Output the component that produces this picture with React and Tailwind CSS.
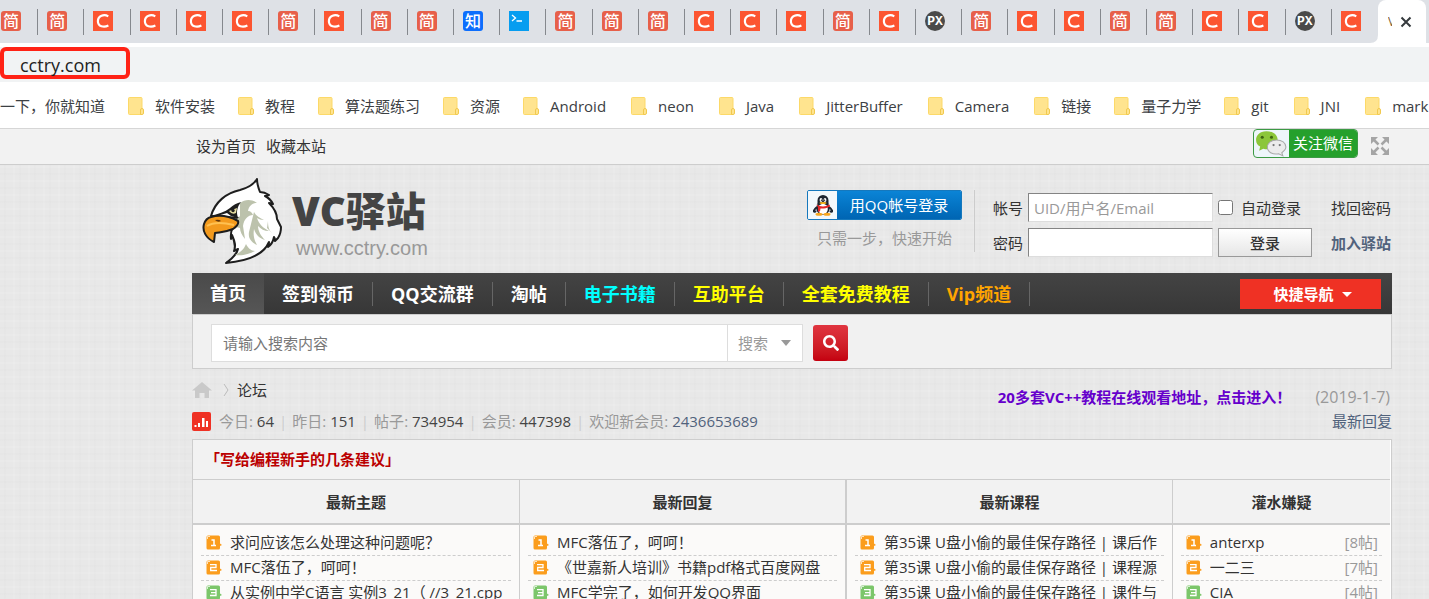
import { FaSearch } from 'react-icons/fa'

const tabs = 'J J C C C C J C J J Z T J J J C C C J C P J C C J J C C P C'.split(' ')

const bookmarks = [
  '软件安装', '教程', '算法题练习', '资源', 'Android', 'neon', 'Java', 'JitterBuffer',
  'Camera', '链接', '量子力学', 'git', 'JNI', 'mark',
]

const navLinks = [
  { label: '首页', color: 'text-white bg-gradient-to-b from-[#4a4a4a] to-[#565656]' },
  { label: '签到领币', color: 'text-white border-r' },
  { label: 'QQ交流群', color: 'text-white border-r' },
  { label: '淘帖', color: 'text-white border-r' },
  { label: '电子书籍', color: 'text-[#00ffff] border-r' },
  { label: '互助平台', color: 'text-[#ffff00] border-r' },
  { label: '全套免费教程', color: 'text-[#ffff00] border-r' },
  { label: 'Vip频道', color: 'text-[#ffa500] border-r' },
]

const stats = [
  { label: '今日', value: '64' },
  { label: '昨日', value: '151' },
  { label: '帖子', value: '734954' },
  { label: '会员', value: '447398' },
  { label: '欢迎新会员', value: '2436653689', link: true },
]

const columns = [
  {
    title: '最新主题',
    items: ['求问应该怎么处理这种问题呢？', 'MFC落伍了，呵呵！', '从实例中学C语言 实例3_21（ //3_21.cpp'],
  },
  {
    title: '最新回复',
    items: ['MFC落伍了，呵呵！', '《世嘉新人培训》书籍pdf格式百度网盘', 'MFC学完了，如何开发QQ界面'],
  },
  {
    title: '最新课程',
    items: [
      '第35课 U盘小偷的最佳保存路径 | 课后作',
      '第35课 U盘小偷的最佳保存路径 | 课程源',
      '第35课 U盘小偷的最佳保存路径 | 课件与',
    ],
  },
  {
    title: '灌水嫌疑',
    items: ['anterxp', '一二三', 'CIA'],
    counts: ['[8帖]', '[7帖]', '[4帖]'],
  },
]

function TabIcon({ type }) {
  if (type === 'J') {
    return (
      <span className="w-5 h-5 rounded-[3px] bg-[#e7604a] text-white text-base leading-5 font-medium text-center">简</span>
    )
  }
  if (type === 'Z') {
    return (
      <span className="w-5 h-5 rounded-[3px] bg-[#0d6efd] text-white text-base leading-5 font-medium text-center">知</span>
    )
  }
  if (type === 'T') {
    return (
      <svg className="w-5 h-5" viewBox="0 0 20 20" fill="none" stroke="#fff" strokeWidth="1.3">
        <path d="M0 0h20v20H0z" fill="#069df0" stroke="none" />
        <path d="M3 4l3.5 3L3 10M7.5 10H13" />
      </svg>
    )
  }
  if (type === 'P') {
    return (
      <span className="w-5 h-5 rounded-full bg-[#4a4a4a] text-white text-[13px] leading-[21px] font-bold flex justify-center font-['Liberation_Mono',monospace]">PX</span>
    )
  }
  return (
    <svg className="w-5 h-5" viewBox="0 0 20 20" fill="none">
      <path d="M0 0h20v20H0z" fill="#fc5531" />
      <path d="M15.3 5.400C11 2.800 4.900 4.800 4.900 10.200S10.800 16.800 15.400 14.600" stroke="#fff" strokeWidth="2.2" />
    </svg>
  )
}

function FolderIcon() {
  return (
    <svg className="w-4 h-[18px] shrink-0" viewBox="0 0 16 18">
      <rect x=".5" y=".5" width="13.5" height="17" rx="1" fill="#ffe48f" stroke="#fcd968" />
      <path d="M12.5 17.5v-4.500q0-1.5 1.5-1.5t1.5 1.5v3q0 1.5-1.5 1.5z" fill="#ffe48f" stroke="#f1c94f" />
    </svg>
  )
}

function Eagle() {
  return (
    <svg className="w-20 h-[86px]" viewBox="0 0 80 86" strokeLinejoin="round">
      <path
        d="M9 38C13 24 24 15 38 12c8-2 14-6 17-11 0 5 1 8 3 13 4 0 6 1 9 3l-4 1c4 2 6 4 8 8l-4-1c5 5 8 10 8 16l4 8c0 5-1 8-3 11l-3 3c0-3 0-3-1-4-1 5-3 8-6 10 1-2 1-3 1-5-5 12-20 19-43 21 7-5 11-9 12-14l-4 2c2-5 1-9-2-16l-1 4c-1-9 2-15 8-21z"
        fill="#fff" stroke="#1e1e1e" strokeWidth="2"
      />
      <path d="M38 25c5-4 12-4 17 0-5 0-8 3-9 8 3 0 4 2 5 4-5 0-9 4-10 11l2 13c-3-4-5-7-5-11l-4-1c0-5 0-8 4-11z" fill="#bcc2ac" />
      <path d="M52 34c2 4 6 6 10 8-3 0-5-1-7-2 2 6 6 10 12 13-5 0-8-2-11-5 0 5 3 10 7 14-6-2-9-5-11-11-1 6 0 11 3 16-6-3-9-7-8-13M33 77c6-3 9-6 11-11 2 4 5 7 9 7-6 3-12 5-20 4zM66 43c0 6 1 9 4 12l-5-5z" fill="#bcc2ac" />
      <path d="M8 38c8-2 15-4 20-8 3-3 7-5 11-6-4 5-5 10-3 16l-7-2-4-3-10 3z" fill="#1e1e1e" />
      <path d="M27 33l8-3-1 5q-4 2-7-2z" fill="#e6dea2" />
      <circle cx="31" cy="32.5" r="1.7" fill="#1e1e1e" />
      <path d="M9 39c7-2 16-2 27 4 1 3-2 6-5 8-7 3-12 3-18 4l-1 9C4 60 0 53 2 46c1-3 3-6 7-7z" fill="#f39a1d" stroke="#1e1e1e" strokeWidth="2" />
      <path d="M5 48c6-4 15-4 27-1" stroke="#ffc151" strokeWidth="2" fill="none" />
      <path d="M13 42q4-1 6 1-3 2-6-1z" fill="#63360b" />
    </svg>
  )
}

function Penguin() {
  return (
    <svg className="w-5 h-[22px]" viewBox="0 0 20 22">
      <path d="M4 13c-5 4-3 6-1 4M16 13c5 4 3 6 1 4" stroke="#1d2530" strokeWidth="2" fill="none" />
      <ellipse cx="10" cy="14" rx="6.8" ry="6.8" fill="#1d2530" />
      <ellipse cx="10" cy="15" rx="4.8" ry="5.2" fill="#fff" />
      <path d="M4.5 10V6.500a5.500 5.500 0 0 1 11 0V10z" fill="#1d2530" />
      <ellipse cx="8" cy="6" rx="1.4" ry="1.9" fill="#fff" />
      <ellipse cx="12" cy="6" rx="1.4" ry="1.9" fill="#fff" />
      <circle cx="8.400" cy="6.200" r=".6" />
      <circle cx="11.600" cy="6.200" r=".6" />
      <ellipse cx="10" cy="9" rx="3.500" ry="1" fill="#f9b31c" />
      <path d="M3.500 10.500c4 2.500 9 2.500 13 0l.5 2c-4 2-7 2.300-9.500 2l-.5 3H5v-4z" fill="#e62525" />
      <ellipse cx="6" cy="20.200" rx="3.500" ry="1.500" fill="#f9a61c" />
      <ellipse cx="14" cy="20.200" rx="3.500" ry="1.500" fill="#f9a61c" />
    </svg>
  )
}

function Wechat() {
  return (
    <svg className="w-[35px] h-[27px] shrink-0" viewBox="0 0 34 26">
      <path d="M12 1C5.500 1 2 5 2 9.500c0 3 1.500 5 4 6.500l-1 4 4-2c7 2 14-2 14-8.500C23 4.500 18.500 1 12 1z" fill="#8cc63a" />
      <circle cx="8" cy="7" r="1.500" fill="#3f6512" />
      <circle cx="17" cy="7" r="1.500" fill="#3f6512" />
      <path d="M22 9.500c-5.500 0-9 3.300-9 7 0 5 5 7.500 11 6.500l4 2-1-3c2-1.500 4-3 4-5.500 0-4-4-7-9-7z" fill="#ececec" stroke="#a9a9a9" />
      <circle cx="19" cy="14.500" r="1.100" fill="#777" />
      <circle cx="25" cy="14.500" r="1.100" fill="#777" />
    </svg>
  )
}

function RankIcon({ rank }) {
  return (
    <svg className="w-4 h-[15px] shrink-0" viewBox="0 0 16 15">
      <path d="M2 .5h10.500Q14 .5 14 2v6.500l2 1.500-2 1V13q0 1.500-1.500 1.500H2Q.5 14.500.5 13V2Q.5.500 2 .5z" fill={rank < 3 ? '#fb9d1d' : '#7cc66b'} />
      <path d="M1.500 4V1.500H4" stroke="#fff" strokeOpacity=".7" fill="none" />
      {rank === 1 && <path d="M5.500 5H8v5.500M5 10.500h5" stroke="#fff" strokeWidth="1.500" fill="none" />}
      {rank === 2 && <path d="M4 4.700h6v2.800H4.700v3H11" stroke="#fff" strokeWidth="1.300" fill="none" />}
      {rank === 3 && <path d="M4 4.700h6v5.800H4M5 7.600h5" stroke="#fff" strokeWidth="1.300" fill="none" />}
    </svg>
  )
}

function BrowserChrome() {
  return (
    <div className="bg-white border-b border-[#d6d6d6] overflow-hidden">
      {/* Tab strip */}
      <div className="flex h-[43px] -ml-2 bg-[#dee1e6]">
        {tabs.map((type, i) => (
          <div key={i} className="flex-1 flex items-start">
            <div className="flex-1 flex pl-[9px] pt-[11px]">
              <TabIcon type={type} />
            </div>
            {i < tabs.length - 1 && <div className="w-px h-[26px] mt-[9px] bg-[#85888d]" />}
          </div>
        ))}
        <div className="relative w-12 mr-[3px] rounded-t-lg bg-white flex items-center justify-end pr-3.5">
          <svg className="absolute -left-2 bottom-0 w-2 h-2" viewBox="0 0 8 8">
            <path d="M8 0v8H0q8 0 8-8z" fill="#fff" />
          </svg>
          <span className="w-1 mr-2 overflow-hidden text-xs text-[#7a5a30]">V</span>
          <button aria-label="关闭" className="w-3 h-3">
            <svg viewBox="0 0 12 12" stroke="#35393d" strokeWidth="2">
              <path d="M1.500 1.500l9 9M10.500 1.500l-9 9" />
            </svg>
          </button>
        </div>
      </div>

      {/* Address bar */}
      <div className="mt-[5px] h-[35px] bg-[#f1f3f4]">
        <div className="w-[130px] h-8 -mt-px border-4 border-[#ff2215] rounded-md pl-4 text-lg leading-7 text-[#222]">
          cctry.com
        </div>
      </div>

      {/* Bookmarks */}
      <div className="flex items-center h-[45px] mt-px gap-[23px] text-[15px] text-[#3c4043] whitespace-nowrap">
        <a href="#">一下，你就知道</a>
        {bookmarks.map((label) => (
          <a key={label} href="#" className={`flex items-center gap-[11px] ${/^[a-z]/i.test(label) ? 'pr-0.5' : ''}`}>
            <FolderIcon />
            {label}
          </a>
        ))}
      </div>
    </div>
  )
}

function TopBar() {
  return (
    <div className="bg-[#f2f2f2] border-b border-[#cdcdcd]">
      <div className="ml-48 mr-[37px] h-[35px] flex justify-between">
        <div className="flex gap-2.5 pl-1 leading-[34px]">
          <a href="#">设为首页</a>
          <a href="#">收藏本站</a>
        </div>
        <div className="flex items-start">
          <button className="flex w-[105px] h-[29px] rounded-sm border border-[#3c9a44] overflow-hidden bg-[#eef6fb]">
            <Wechat />
            <span className="flex-1 bg-[#25a02c] text-white text-center leading-[27px]">关注微信</span>
          </button>
          <svg className="w-5 h-5 ml-3 mr-0.5 mt-[7px]" viewBox="0 0 20 20" fill="#a5a5a5" stroke="#a5a5a5" strokeWidth="2.500">
            <path d="M4 4l4.500 4.500M16 4l-4.500 4.500M4 16l4.500-4.500M16 16l-4.500-4.500" />
            <path d="M1 1h7L1 8zM19 1v7l-7-7zM1 19v-7l7 7zM19 19h-7l7-7z" stroke="none" />
          </svg>
        </div>
      </div>
    </div>
  )
}

function Header() {
  return (
    <div className="flex justify-between h-[108px]">
      <a href="#" className="flex pl-2.5 pt-[13px]">
        <Eagle />
        <div className="pl-2.5 pt-2">
          <div className="text-[40px] leading-[50px] font-black text-[#444] whitespace-nowrap">VC驿站</div>
          <div className="pl-1 text-xl leading-6 text-[#999] font-['Liberation_Sans',sans-serif]">www.cctry.com</div>
        </div>
      </a>
      <div className="flex items-start pt-[25px] pr-px">
        <div className="h-[62px] pr-3 border-r border-[#ccc]">
          <button className="flex h-[30px] w-[155px] border border-[#1578bd] rounded-xs overflow-hidden">
            <span className="w-[29px] h-full bg-[#f2f8fc] flex items-center justify-center">
              <Penguin />
            </span>
            <span className="flex-1 h-full bg-gradient-to-b from-[#0b84d6] to-[#0065b3] text-white leading-7">用QQ帐号登录</span>
          </button>
          <p className="mt-2 text-center text-[#999]">只需一步，快速开始</p>
        </div>
        <form className="grid grid-cols-[30px_185px_94px_74px] gap-x-[5px] gap-y-1.5 pl-[18px] pt-[3px] items-center">
          <label htmlFor="user">帐号</label>
          <input id="user" type="text" placeholder="UID/用户名/Email" className="h-[29px] px-[5px] bg-white border border-t-[#848484] border-l-[#848484] border-r-[#ddd] border-b-[#ddd] placeholder:text-[#999]" />
          <label className="flex items-center gap-2">
            <input type="checkbox" className="w-[15px] h-[15px]" />
            自动登录
          </label>
          <a href="#" className="pl-3.5 whitespace-nowrap">找回密码</a>
          <label htmlFor="pass">密码</label>
          <input id="pass" type="password" className="h-[29px] px-[5px] bg-white border border-t-[#848484] border-l-[#848484] border-r-[#ddd] border-b-[#ddd]" />
          <button type="button" className="h-[29px] border border-[#999] bg-gradient-to-b from-white to-[#e6e6e6] font-medium">登录</button>
          <a href="#" className="pl-3.5 whitespace-nowrap font-semibold text-[#51627c]">加入驿站</a>
        </form>
      </div>
    </div>
  )
}

function Nav() {
  return (
    <nav className="flex h-[41px] bg-gradient-to-b from-[#444] to-[#373737]">
      {navLinks.map((link) => (
        <div key={link.label} className="flex items-center">
          <a href="#" className={`px-[18px] text-lg font-bold whitespace-nowrap border-[#666] ${link.label === '首页' ? 'leading-[41px]' : 'leading-6'} ${link.color}`}>
            {link.label}
          </a>
        </div>
      ))}
      <button className="ml-auto mr-[11px] mt-1.5 h-[30px] w-[141px] pl-1 bg-[#ef3124] text-white font-bold flex items-center justify-center gap-2">
        快捷导航
        <svg className="w-2.5 h-[5px]" viewBox="0 0 10 5"><path d="M0 0h10L5 5z" fill="#fff" /></svg>
      </button>
    </nav>
  )
}

function SearchBar() {
  return (
    <form className="flex items-center h-[55px] pt-0.5 pl-[18px] bg-[#f1f1f1] border border-[#cdcdcd]">
      <input type="text" aria-label="搜索内容" placeholder="请输入搜索内容" className="w-[517px] h-[38px] px-[11px] bg-white border border-[#ddd] placeholder:text-[#777]" />
      <div className="relative -ml-px">
        <select aria-label="搜索类型" className="appearance-none w-[76px] h-[38px] pl-2.5 bg-white border border-[#ddd] text-[#999]">
          <option>搜索</option>
        </select>
        <svg className="absolute right-3 top-4 w-2.5 h-1.5" viewBox="0 0 10 6"><path d="M0 0h10L5 6z" fill="#999" /></svg>
      </div>
      <button type="button" aria-label="搜索" className="ml-2.5 w-[35px] h-9 rounded-[3px] bg-gradient-to-b from-[#e03540] to-[#c4000f] text-white flex items-center justify-center">
        <FaSearch className="w-4 h-[18px]" />
      </button>
    </form>
  )
}

function StatusLine() {
  return (
    <div className="flex justify-between h-[70px]">
      <div>
        <div className="flex items-center h-[42px]">
          <svg className="w-5 h-4" viewBox="0 0 20 16" fill="#c9c9c9">
            <path d="M10 0l10 8.500h-3V16h-4.500v-5h-5v5H3V8.500H0z" />
          </svg>
          <svg className="w-2 h-3 ml-2.5 mr-[7px]" viewBox="0 0 8 12" fill="none" stroke="#bbb"><path d="M2 0l4 6-4 6" /></svg>
          <a href="#">论坛</a>
        </div>
        <div className="flex items-center h-5 whitespace-nowrap">
          <svg className="w-[19px] h-[19px] mr-2" viewBox="0 0 19 19">
            <rect width="19" height="19" rx="2" fill="#ef3124" />
            <path d="M2.500 13h2v2h-2zM6 11h2v4H6zM10 6h2.500v9H10zM14 9h2v6h-2z" fill="#fff" />
          </svg>
          {stats.map((stat, i) => (
            <span key={stat.label} className="text-[#999]">
              {i > 0 && <span className="mx-[5px] text-[#ccc]">|</span>}
              {stat.label}: <em className={`not-italic ${stat.link ? 'text-[#51627c]' : 'text-[#444]'}`}>{stat.value}</em>
            </span>
          ))}
        </div>
      </div>
      <div className="pt-4 text-right leading-6">
        <p className="pr-0.5 flex gap-6 text-[#999]">
          <a href="#" className="font-bold text-[#60c]">20多套VC++教程在线观看地址，点击进入！</a>
          <span className="text-base leading-6">(2019-1-7)</span>
        </p>
        <a href="#" className="text-[#51627c]">最新回复</a>
      </div>
    </div>
  )
}

function Board() {
  return (
    <div className="border border-[#cdcdcd] pr-px bg-white">
      <table className="w-full table-fixed border-collapse bg-[#f2f2f2]">
        <colgroup>
          <col className="w-3/11" />
          <col className="w-3/11" />
          <col className="w-3/11" />
          <col className="w-2/11" />
        </colgroup>
        <thead>
          <tr>
            <td colSpan={4} className="h-[39px] pl-3 border-b border-[#cdcdcd] font-bold text-[#b00]">
              <a href="#">「写给编程新手的几条建议」</a>
            </td>
          </tr>
          <tr>
            {columns.map((col, i) => (
              <th key={col.title} className={`h-[45px] pt-0.5 border-b-2 border-[#cdcdcd] font-bold ${i === 2 ? 'border-l-2' : i ? 'border-l' : ''}`}>
                {col.title}
              </th>
            ))}
          </tr>
        </thead>
        <tbody>
          <tr className="bg-[#fbfaf9]">
            {columns.map((col, i) => (
              <td key={col.title} className={`px-2 pt-1.5 align-top border-[#cdcdcd] ${i === 2 ? 'border-l-2' : i ? 'border-l' : ''}`}>
                <ul>
                  {col.items.map((item, n) => (
                    <li key={item} className="flex items-center h-[25px] pb-0.5 pl-[5px] pr-1 gap-2 border-b border-dashed border-[#cdcdcd]">
                      <RankIcon rank={n + 1} />
                      <a href="#" className="flex-1 whitespace-nowrap overflow-hidden">{item}</a>
                      {col.counts && <span className="text-[#999]">{col.counts[n]}</span>}
                    </li>
                  ))}
                </ul>
              </td>
            ))}
          </tr>
        </tbody>
      </table>
    </div>
  )
}

function App() {
  return (
    <div className="h-screen overflow-hidden text-[15px] leading-5 text-[#333] font-['Open_Sans','Noto_Sans_CJK_SC',sans-serif] bg-[#e8e8e8] bg-[repeating-linear-gradient(90deg,#0000_0_4px,#00000002_4px_6px,#0000_6px_13px,#ffffff18_13px_15px),repeating-linear-gradient(#0000_0_5px,#00000002_5px_7px,#0000_7px_12px,#ffffff18_12px_14px)]">
      <BrowserChrome />
      <TopBar />
      <main className="ml-48 mr-[37px]">
        <Header />
        <Nav />
        <SearchBar />
        <StatusLine />
        <Board />
      </main>
    </div>
  )
}

export default App
